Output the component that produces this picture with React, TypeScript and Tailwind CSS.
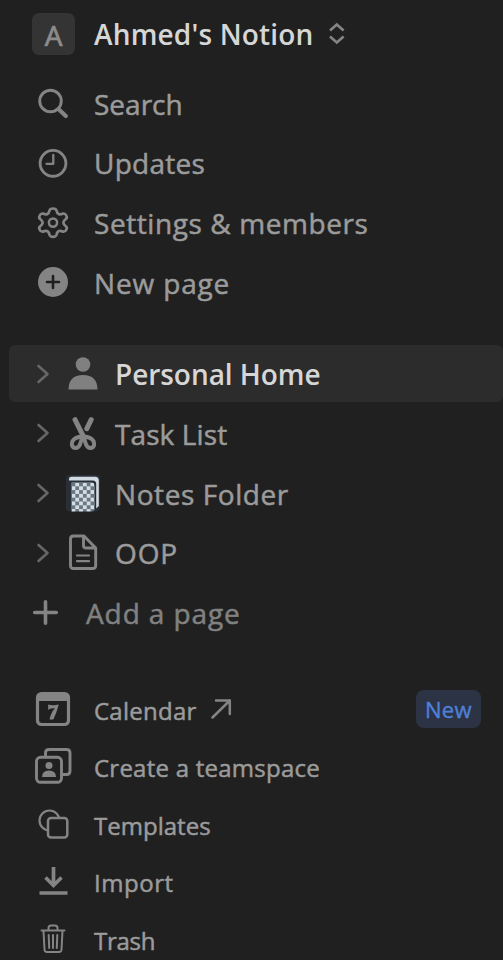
import type { ReactNode } from "react";

type IconProps = { box: string; w: number; h: number; children: ReactNode };

function Icon({ box, w, h, children }: IconProps) {
  return (
    <svg width={w} height={h} viewBox={box} fill="none" stroke="#848484" strokeWidth="2.9" strokeLinecap="round" strokeLinejoin="round" className="shrink-0">
      {children}
    </svg>
  );
}

type RowProps = { icon: ReactNode; label: string; height: string; text: string; extra?: ReactNode };

function Row({ icon, label, height, text, extra }: RowProps) {
  return (
    <div className={`flex shrink-0 items-center pl-7 ${height}`}>
      {icon}
      <span className={`whitespace-nowrap font-medium [-webkit-text-stroke:0.5px_currentColor] ${text}`}>{label}</span>
      {extra}
    </div>
  );
}

const main = "ml-4 text-[28px] leading-[38px] text-[#9b9b9b]";
const page = "ml-[9px] text-[28px] leading-[38px] text-[#9b9b9b]";
const small = "ml-4 text-[24px] leading-[34px] text-[#9b9b9b]";

function Chevron() {
  return <path d="M38.5 366l9 8-9 8" stroke="#676767" strokeWidth="2.6" />;
}

export default function App() {
  return (
    <div className="flex h-[960px] w-[503px] flex-col overflow-hidden bg-[#202020] pt-1 font-['Open_Sans','Noto_Sans',sans-serif]">
      <div className="flex h-[60px] shrink-0 items-center pl-8">
        <div className="flex h-[42px] w-[43px] items-center justify-center rounded-[7px] bg-[#343434] pt-0.5 text-[28px] font-medium text-[#8c8c8c] [-webkit-text-stroke:0.7px_currentColor]">A</div>
        <span className="ml-[19px] whitespace-nowrap text-[28px] font-semibold leading-[38px] tracking-[0.17px] text-[#d6d6d6]">Ahmed's Notion</span>
        <svg width="18" height="26" viewBox="328 20 18 26" className="ml-[15px]" fill="none" stroke="#858585" strokeWidth="2.6">
          <path d="M330 29.500l6.800-6 6.800 6M330 35.500l6.800 6 6.800-6" />
        </svg>
      </div>

      <nav className="mt-2.5 flex flex-col">
        <Row height="h-[60px]" label="Search" text={main} icon={
          <Icon box="28 74 50 60" w={50} h={60}><circle cx="50.500" cy="101" r="10.800" /><path d="M59.500 110l6.300 6" strokeWidth="4.200" /></Icon>} />
        <Row height="h-[60px]" label="Updates" text={`${main} mb-0.5 tracking-[0.25px]`} icon={
          <Icon box="28 134 50 60" w={50} h={60}><circle cx="53" cy="163.300" r="12.900" /><path d="M53.300 155v8.800H46.500" strokeWidth="2.300" /></Icon>} />
        <Row height="h-[59px]" label="Settings & members" text={`${main} mb-0.5 tracking-[0.58px]`} icon={
          <Icon box="28 194 50 59" w={50} h={59}>
            <path strokeWidth="2.700" d="M53 208.500Q56 208.500 56.500 210.500Q57 213.500 59 214.300Q61 214.500 63.200 213.500Q65.300 213.300 66.300 215.500Q67.500 217.800 65.800 219Q63.300 221 63.300 222.600Q63.300 224.300 65.800 226.200Q67.500 227.500 66.300 229.700Q65.300 231.900 63.200 231.700Q61 230.700 59 231Q57 231.700 56.500 234.700Q56 236.800 53 236.800Q50 236.800 49.500 234.700Q49 231.700 47 231Q45 230.700 42.800 231.700Q40.700 231.900 39.700 229.700Q38.500 227.500 40.200 226.200Q42.700 224.300 42.700 222.600Q42.700 221 40.200 219Q38.500 217.800 39.700 215.500Q40.700 213.300 42.800 213.500Q45 214.500 47 214.300Q49 213.500 49.500 210.500Q50 208.500 53 208.500Z" />
            <circle cx="53" cy="222.600" r="4.100" strokeWidth="2.500" />
          </Icon>} />
        <Row height="h-[60px]" label="New page" text={`${main} tracking-[0.85px]`} icon={
          <Icon box="28 253 50 60" w={50} h={60}><circle cx="53" cy="282" r="15" fill="#848484" stroke="none" /><path d="M53 276v12M47 282h12" stroke="#202020" strokeWidth="2.600" /></Icon>} />
      </nav>

      <nav className="mt-8 flex flex-col">
        <div className="ml-[9px] flex h-[57px] w-[494px] items-center rounded-[6px] bg-[#2c2c2c] pl-[19px]">
          <Icon box="28 345 78 57" w={78} h={57}><Chevron /><circle cx="83" cy="364.500" r="7.300" fill="#808080" stroke="none" /><path d="M68.500 389.500C68.500 380 73.500 375 83 375s14.500 5 14.500 14.500z" fill="#808080" stroke="none" /></Icon>
          <span className="ml-[9px] whitespace-nowrap text-[28px] font-semibold leading-[38px] tracking-[-0.05px] text-[#d6d6d6]">Personal Home</span>
        </div>
        <div className="mt-0.5 flex flex-col">
          <Row height="h-[60px]" label="Task List" text={`${page} tracking-[0.1px]`} icon={
            <Icon box="28 404 78 60" w={78} h={60}>
              <g transform="translate(0 59)"><Chevron /></g>
              <path d="M75 419.700l8.500 17M91.200 419.700l-4.400 9" strokeWidth="5" />
              <path d="M82.500 436.500Q74.500 437 72.300 441.500Q70.600 447 75 448Q78.500 448.200 80 444.500ZM83.500 436.500Q91.500 437 93.700 441.500Q95.400 447 91 448Q87.500 448.200 86 444.500Z" strokeWidth="4" />
            </Icon>} />
          <Row height="h-[60px]" label="Notes Folder" text={`${page} tracking-[0.58px]`} icon={
            <Icon box="28 464 78 60" w={78} h={60}>
              <defs><pattern id="checks" width="7.600" height="7.600" x="71.500" y="482.500" patternUnits="userSpaceOnUse"><path d="M0 0h7.600v7.600H0z" fill="#6b7881" stroke="none" /><path d="M3.800 0h3.800v3.800H3.800zM0 3.800h3.800v3.800H0z" fill="#d2dde5" stroke="none" /></pattern></defs>
              <g transform="translate(0 119)"><Chevron /></g>
              <path d="M70 475h26q4 0 4 4v27q0 5-5 5.500H70q-4 0-4-4v-28.500q0-4 4-4z" fill="#292f36" stroke="none" />
              <path d="M69 480.500v-1.500q0-2.300 2.500-2.300H95q3.800 0 3.800 3.800V506l-2.600 2.500V484q0-3.500-3.500-3.500z" fill="#d2dbe2" stroke="none" />
              <path d="M71.500 482.500h20q3 0 3 3v23q0 3-3 3h-20z" fill="url(#checks)" stroke="none" />
            </Icon>} />
          <Row height="h-[59px]" label="OOP" text={`${page} mb-0.5 tracking-[0.9px]`} icon={
            <Icon box="28 524 78 59" w={78} h={59}>
              <g transform="translate(0 179)"><Chevron /></g>
              <path d="M73.500 536H84l11.700 12v17.500q0 3-3 3H73.500q-3 0-3-3V539q0-3 3-3zM83.500 536v9.500q0 2.500 2.500 2.500h9.700" />
              <path d="M77 555.500h12M77 561.200h12" strokeWidth="2.200" />
            </Icon>} />
          <Row height="h-[60px]" label="Add a page" text="ml-2 text-[28px] leading-[38px] tracking-[0.9px] text-[#818181]" icon={
            <Icon box="28 583 50 60" w={50} h={60}><path d="M45.500 601.800v21.500M34.700 612.500h21.600" strokeWidth="3.600" /></Icon>} />
        </div>
      </nav>

      <nav className="mt-[39px] flex flex-col">
        <Row height="h-[58px]" label="Calendar" text={`${small} tracking-[0.25px]`} icon={
          <Icon box="28 682 50 58" w={50} h={58}>
            <rect x="37.500" y="693.500" width="31" height="31" rx="4" strokeWidth="3.200" />
            <path d="M37 694h32v7H37z" fill="#848484" stroke="none" />
            <path d="M48.200 704.500Q53 706 58.800 704.500Q56.500 713 53.300 719.500H49.500Q51 712.500 55 708.300L51 708.500Q49.500 708.500 48.200 710Z" fill="#848484" stroke="none" />
          </Icon>}
          extra={<>
            <svg width="24" height="26" viewBox="208 696 24 26" className="mb-1 ml-3" fill="none" stroke="#848484" strokeWidth="2.500" strokeLinecap="round" strokeLinejoin="round"><path d="M211.500 717.500L228.800 700.500M215 700.500h13.800V714" /></svg>
            <span className="mb-1 ml-auto mr-[22px] flex h-[38px] w-[65px] items-center justify-center rounded-[8px] bg-[#2b3345] text-[22px] font-medium tracking-[0.4px] text-[#4f80d8] [-webkit-text-stroke:0.4px_currentColor]">New</span>
          </>} />
        <Row height="h-[57px]" label="Create a teamspace" text={`${small} mb-0.5 tracking-[0.24px]`} icon={
          <Icon box="28 740 50 57" w={50} h={57}>
            <rect x="36.500" y="757.300" width="25" height="25" rx="4" />
            <path d="M45.500 757v-4q0-3.500 3.500-3.500h17.500q3.500 0 3.500 3.500v18q0 3.500-3.500 3.500H62" />
            <circle cx="49" cy="765.500" r="3.500" fill="#848484" stroke="none" /><path d="M42 777q0-6.500 7-6.500t7 6.500z" fill="#848484" stroke="none" />
          </Icon>} />
        <Row height="h-[58px]" label="Templates" text={`${small} tracking-[0.02px]`} icon={
          <Icon box="28 797 50 58" w={50} h={58}>
            <circle cx="49.500" cy="820.500" r="10" strokeWidth="2.200" /><rect x="48" y="818" width="19.300" height="19.500" rx="3" fill="#202020" strokeWidth="2.500" />
          </Icon>} />
        <Row height="h-[57px]" label="Import" text={`${small} mb-0.5 tracking-[0.55px]`} icon={
          <Icon box="28 855 50 57" w={50} h={57}><path d="M53.500 867v19M45.500 877.500l8 8 8-8M39.500 893h28" strokeWidth="3.700" strokeLinecap="butt" strokeLinejoin="miter" /></Icon>} />
        <Row height="h-[58px]" label="Trash" text={`${small} tracking-[-0.25px]`} icon={
          <Icon box="28 912 50 58" w={50} h={58}><path d="M41.500 930.500h23M48.500 930v-2q0-2.500 2.500-2.500h4q2.500 0 2.500 2.500v2M43.500 931l1 18.500q.1 2.500 2.500 2.500h12q2.400 0 2.500-2.500l1-18.500M48.700 935l.5 13M53 935v13M57.300 935l-.5 13" strokeWidth="2" /></Icon>} />
      </nav>
    </div>
  );
}
